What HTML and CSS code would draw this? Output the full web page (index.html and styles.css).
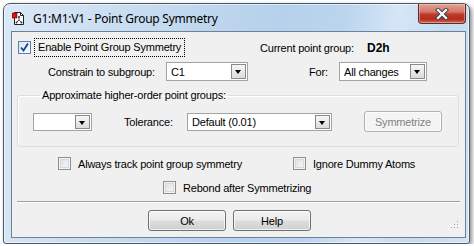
FILE: index.html
```html
<!DOCTYPE html>
<html lang="en">

<head>
  <meta charset="UTF-8">
  <title>G1:M1:V1 - Point Group Symmetry</title>
  <link rel="stylesheet" href="styles.css">
</head>

<body>
  <div class="window">
    <div class="titlebar">
      <svg class="app-icon" width="13" height="15" viewBox="0 0 13 15">
        <path d="M2.5 1.5h6l3 3v9h-9z" fill="#fff" stroke="#222" />
        <path d="M8.5 1.5v3h3" fill="none" stroke="#222" />
        <rect x="0" y="2" width="5" height="5" fill="#e01010" stroke="#600" stroke-width="0.6" />
        <path d="M7 6v3M7 9l-2.5 2.5M7 9l2.5 2.5" stroke="#555" stroke-width="1" fill="none" />
        <circle cx="7" cy="6" r="1" fill="#333" />
        <circle cx="4.5" cy="11.5" r="1" fill="#333" />
        <circle cx="9.5" cy="11.5" r="1" fill="#333" />
      </svg>
      <span class="title">G1:M1:V1 - Point Group Symmetry</span>
      <div class="close-btn">
        <svg width="14" height="12" viewBox="0 0 14 12">
          <path d="M3 2l8 8M11 2l-8 8" stroke="#3a4454" stroke-width="4.2" stroke-linecap="square" />
          <path d="M3 2l8 8M11 2l-8 8" stroke="#fff" stroke-width="2.2" stroke-linecap="square" />
        </svg>
      </div>
    </div>

    <div class="client">
      <div class="row row-enable">
        <div class="cell-enable">
          <span class="cb checked">
            <svg width="11" height="11" viewBox="0 0 11 11">
              <path d="M2 5.5l2.5 3 4.5-7" stroke="#1c3f94" stroke-width="1.8" fill="none" />
            </svg>
          </span>
          <span class="focus">Enable Point Group Symmetry</span>
        </div>
        <span class="current-lb">Current point group:</span>
        <span class="current-val">D2h</span>
      </div>

      <div class="row row-constrain">
        <span class="constrain-lb">Constrain to subgroup:</span>
        <div class="combo combo-sub"><span class="combo-text">C1</span><span class="arrow"></span></div>
        <span class="for-lb">For:</span>
        <div class="combo combo-for"><span class="combo-text">All changes</span><span class="arrow"></span></div>
      </div>

      <fieldset class="group">
        <legend>Approximate higher-order point groups:</legend>
        <div class="row group-row">
          <div class="combo combo-order"><span class="combo-text"></span><span class="arrow"></span></div>
          <span class="tol-lb">Tolerance:</span>
          <div class="combo combo-tol"><span class="combo-text">Default (0.01)</span><span class="arrow"></span></div>
          <button class="btn btn-sym" disabled>Symmetrize</button>
        </div>
      </fieldset>

      <div class="row row-track">
        <label class="check check-track"><span class="cb"></span>Always track point group symmetry</label>
        <label class="check"><span class="cb"></span>Ignore Dummy Atoms</label>
      </div>

      <div class="row row-rebond">
        <label class="check"><span class="cb"></span>Rebond after Symmetrizing</label>
      </div>

      <div class="separator"></div>

      <div class="row row-buttons">
        <button class="btn">Ok</button>
        <button class="btn">Help</button>
        <svg class="grip" width="8" height="8" viewBox="0 0 8 8">
          <rect x="6" y="0" width="1" height="1" fill="#a0a0a0" />
          <rect x="3" y="3" width="1" height="1" fill="#a0a0a0" />
          <rect x="6" y="3" width="1" height="1" fill="#a0a0a0" />
          <rect x="0" y="6" width="1" height="1" fill="#a0a0a0" />
          <rect x="3" y="6" width="1" height="1" fill="#a0a0a0" />
          <rect x="6" y="6" width="1" height="1" fill="#a0a0a0" />
        </svg>
      </div>
    </div>
  </div>
</body>

</html>
```

FILE: styles.css
```css
body {
  margin: 0;
  background: #fff;
}

* {
  box-sizing: border-box;
}

.window {
  margin: 3px 0 0 3px;
  width: 467px;
  height: 241px;
  border: 1px solid #4a5868;
  border-radius: 7px 7px 3px 3px;
  background: linear-gradient(100deg, #dbe8f6 0%, #c8ddf1 25%, #b6d1eb 55%, #bcd5ee 68%, #d6e6f6 78%, #c6dbf0 88%, #d2e3f4 100%);
  box-shadow: inset 0 0 0 1px rgba(255, 255, 255, 0.55), 2px 2px 4px rgba(0, 0, 0, 0.45);
  display: flex;
  flex-direction: column;
}

.titlebar {
  height: 27px;
  display: flex;
  align-items: center;
  padding-left: 8px;
}

.app-icon {
  margin-right: 8px;
  margin-top: 1px;
}

.title {
  font-family: "Noto Sans", sans-serif;
  font-size: 12px;
  letter-spacing: -0.25px;
  color: #000;
  margin-top: 1px;
}

.close-btn {
  margin-left: auto;
  margin-right: 3px;
  align-self: flex-start;
  width: 48px;
  height: 20px;
  border: 1px solid #5a2a26;
  border-top: none;
  border-radius: 0 0 4px 4px;
  background: linear-gradient(#e5a392 0%, #d2786a 40%, #c0392a 55%, #b52d1d 80%, #d06a50 100%);
  box-shadow: inset 0 0 0 1px rgba(255, 210, 200, 0.45);
  display: flex;
  align-items: center;
  justify-content: center;
}

.client {
  margin: 0 3px 0 7px;
  height: 207px;
  border: 1px solid #6e8196;
  background: #f0f0f0;
  font-family: "Liberation Sans", Arial, sans-serif;
  font-size: 11px;
  letter-spacing: -0.2px;
  color: #000;
}

.row {
  display: flex;
  align-items: center;
}

/* top checkbox row */
.row-enable {
  margin-top: 6px;
  height: 19px;
}

.cell-enable {
  width: 248px;
  padding-left: 6px;
  display: flex;
  align-items: center;
}

.focus {
  margin-left: 3px;
  height: 19px;
  line-height: 17px;
  padding: 0 3px;
  border: 1px dotted #000;
  white-space: nowrap;
}

.current-lb {
  width: 107px;
}

.current-val {
  font-weight: bold;
  font-size: 12px;
  letter-spacing: 0;
}

/* constrain row */
.row-constrain {
  margin-top: 5px;
  height: 19px;
  padding-left: 36px;
}

.constrain-lb {
  width: 118px;
}

.for-lb {
  margin-left: 61px;
  width: 30px;
}

.combo {
  height: 19px;
  border: 1px solid #a3a3a3;
  background: #fff;
  display: flex;
  align-items: center;
  padding: 1px;
}

.combo-text {
  flex: 1;
  padding-left: 3px;
  white-space: nowrap;
}

.arrow {
  width: 15px;
  height: 15px;
  border: 1px solid #8a8a8a;
  background: linear-gradient(#f6f6f6, #dcdcdc);
  position: relative;
}

.arrow::after {
  content: "";
  position: absolute;
  left: 3px;
  top: 5px;
  border-left: 3.5px solid transparent;
  border-right: 3.5px solid transparent;
  border-top: 4px solid #000;
}

.combo-sub {
  width: 82px;
}

.combo-for {
  width: 88px;
}

/* group box */
.group {
  margin: 8px 0 0 5px;
  width: 442px;
  padding: 0 0 14px 15px;
  border: 1px solid #d5dfe5;
  border-radius: 3px;
  box-shadow: inset 1px 1px 0 #fff;
}

.group legend {
  margin-left: 7px;
  padding: 0 2px;
  line-height: 13px;
}

.group-row {
  margin-top: 9px;
  height: 21px;
}

.combo-order {
  width: 59px;
  height: 18px;
}

.tol-lb {
  margin-left: 32px;
  width: 63px;
}

.combo-tol {
  width: 145px;
  height: 18px;
}

.combo-order .arrow,
.combo-tol .arrow {
  height: 14px;
}

.btn {
  height: 21px;
  width: 78px;
  padding: 0;
  border: 1px solid #707070;
  border-radius: 3px;
  background: linear-gradient(#f2f2f2 0%, #ebebeb 48%, #dddddd 52%, #cfcfcf 100%);
  box-shadow: inset 0 0 0 1px rgba(255, 255, 255, 0.7);
  font-family: "Liberation Sans", Arial, sans-serif;
  font-size: 11px;
  letter-spacing: -0.2px;
  color: #000;
}

.btn-sym {
  margin-left: 32px;
  border-color: #adb2b5;
  background: #f4f4f4;
  color: #838383;
}

/* check rows */
.cb {
  width: 13px;
  height: 13px;
  border: 1px solid #8e8f8f;
  background: linear-gradient(135deg, #dcdcdc, #fbfbfb);
  box-shadow: inset 0 0 0 1px #f4f4f4, inset 0 0 0 2px #d8d8d8;
  display: inline-flex;
  align-items: center;
  justify-content: center;
  flex: none;
}

.cb.checked {
  border-color: #5a7fb0;
  background: linear-gradient(135deg, #d8e6f6, #fafcff);
  box-shadow: none;
}

.check {
  display: flex;
  align-items: center;
  gap: 7px;
  white-space: nowrap;
}

.row-track {
  margin-top: 10px;
  height: 13px;
  padding-left: 46px;
}

.check-track {
  width: 235px;
}

.row-rebond {
  margin-top: 11px;
  height: 13px;
  padding-left: 151px;
}

.separator {
  margin: 7px 5px 0 5px;
  height: 2px;
  border-top: 1px solid #a0a0a0;
  border-bottom: 1px solid #fff;
}

.row-buttons {
  margin-top: 7px;
  padding-left: 136px;
  gap: 7px;
  align-items: flex-start;
}

.grip {
  margin: 11px 6px 0 auto;
}
```
